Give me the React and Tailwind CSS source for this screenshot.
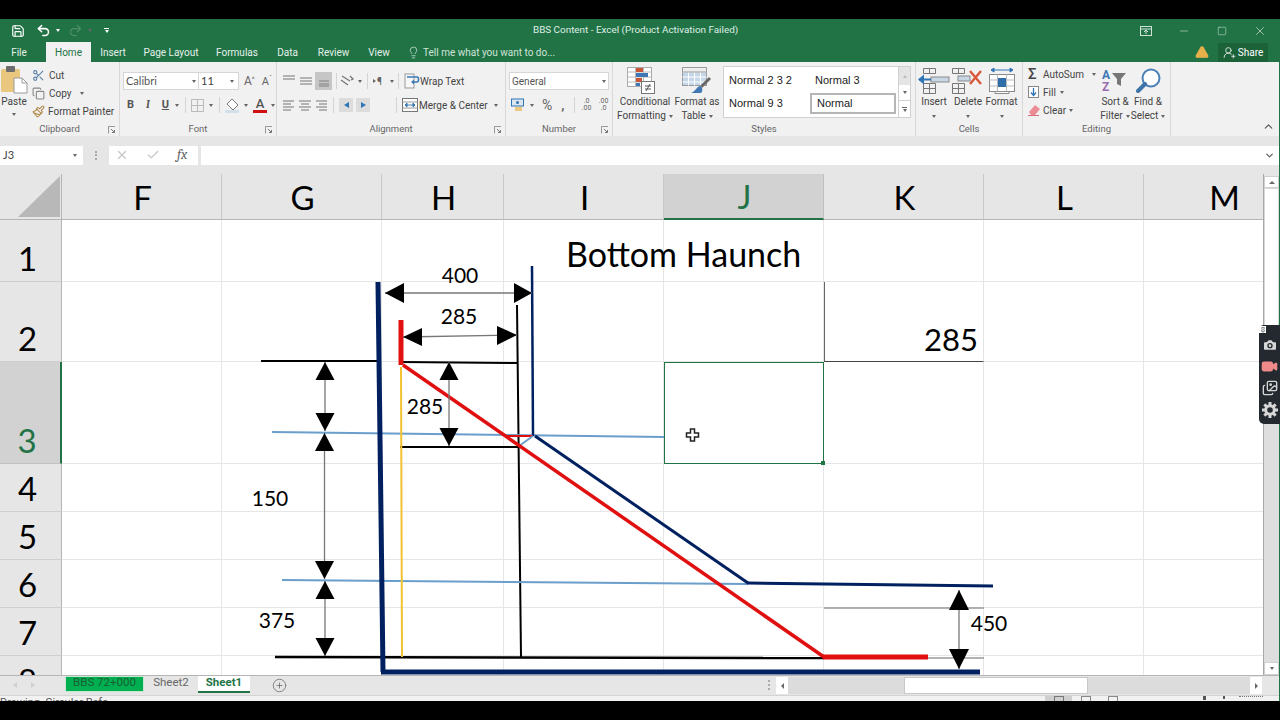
import React from "react";
import {
  Save, Undo2, Redo2, Minus, Square, X, Lightbulb, TriangleAlert, UserRoundPlus, ChevronUp, ChevronDown,
  Scissors, Copy, Paintbrush, Check, CirclePlus, Camera, Video, Images, Pin,
} from "lucide-react";

function Caret({ className = "" }) {
  return <span className={`inline-block w-0 h-0 border-x-[2.5px] border-t-[3px] border-x-transparent border-t-[#666] ${className}`} />;
}

function Launcher() {
  return (
    <svg width="8" height="8" viewBox="0 0 8 8" className="absolute right-[3px] top-[3px]">
      <path d="M.5 3V.5H7M.5.5V7.5" stroke="#999" fill="none" />
      <path d="M3 3l3.5 3.5M6.5 4v2.5H4" stroke="#777" fill="none" />
    </svg>
  );
}

function Group({ w, label, launcher, children }) {
  return (
    <div className={`${w} shrink-0 flex flex-col border-r border-[#d8d8d8] pt-[2px]`}>
      <div className="h-[59px] shrink-0">{children}</div>
      <div className="relative h-[13px] shrink-0 flex items-center justify-center text-[9.5px] text-[#666]">
        {label}
        {launcher && <Launcher />}
      </div>
    </div>
  );
}

function Lines({ rows, w = 14 }) {
  return (
    <svg width={w} height="14" viewBox="0 0 14 14">
      {rows.map(([y, x1, x2], i) => (
        <line key={i} x1={x1} x2={x2} y1={y} y2={y} stroke="#8a8a8a" strokeWidth="1.2" />
      ))}
    </svg>
  );
}

function Sep({ className = "" }) {
  return <span className={`w-px h-[16px] bg-[#d4d4d4] ${className}`} />;
}

function PasteIcon() {
  return (
    <svg width="27" height="28" viewBox="0 0 27 28">
      <rect x="0" y="3" width="19" height="23" rx="1.5" fill="#e9c77f" />
      <rect x="5" y="0" width="9" height="6" rx="1" fill="#6d6d6d" />
      <path d="M13 12h8l5 5v10H13z" fill="#fff" stroke="#9a9a9a" />
      <path d="M21 12v5h5" fill="none" stroke="#9a9a9a" />
    </svg>
  );
}

function WrapIcon() {
  return (
    <svg width="16" height="16" viewBox="0 0 16 16">
      <rect x="1" y="1" width="9" height="14" fill="#f7f7f7" stroke="#999" />
      <path d="M3 4h10c2 0 2 5 0 5H8" fill="none" stroke="#3b7ab5" strokeWidth="1.6" />
      <path d="M10 6.5L7 9l3 2.5z" fill="#3b7ab5" />
    </svg>
  );
}

function MergeIcon() {
  return (
    <svg width="16" height="14" viewBox="0 0 16 14">
      <rect x=".5" y=".5" width="15" height="13" fill="#fff" stroke="#777" />
      <path d="M.5 4h15M.5 10h15" stroke="#999" />
      <path d="M3 7h10M3 7l2-2v4zM13 7l-2-2v4z" stroke="#3b7ab5" fill="#3b7ab5" />
    </svg>
  );
}

function IndentBtn({ dir, className = "" }) {
  return (
    <span className={`w-[14px] h-[14px] bg-[#dcdcdc] flex items-center justify-center ${className}`}>
      {dir === "l"
        ? <span className="w-0 h-0 border-y-[3.5px] border-r-[5px] border-y-transparent border-r-[#2f75b5]" />
        : <span className="w-0 h-0 border-y-[3.5px] border-l-[5px] border-y-transparent border-l-[#2f75b5]" />}
    </span>
  );
}

function TableCF() {
  return (
    <svg width="36" height="28" viewBox="0 0 36 28">
      <rect x=".5" y=".5" width="24" height="19" fill="#fff" stroke="#aaa" />
      <path d="M8.5 .5v19M16.5 .5v19M.5 5h24M.5 10h24M.5 15h24" stroke="#bbb" />
      <rect x="9" y="1" width="7" height="4" fill="#c9573a" />
      <rect x="9" y="6" width="12" height="4" fill="#3f78b5" />
      <rect x="9" y="11" width="6" height="4" fill="#c9573a" />
      <rect x="9" y="16" width="4" height="3" fill="#3f78b5" />
      <rect x="14.5" y="14.5" width="13" height="12" fill="#fff" stroke="#777" />
      <path d="M18 19h6M18 22h6M19 24l4-7" stroke="#555" fill="none" />
    </svg>
  );
}

function TableFT() {
  return (
    <svg width="30" height="28" viewBox="0 0 30 28">
      <rect x=".5" y=".5" width="24" height="18" fill="#c5d6e8" stroke="#9a9a9a" />
      <path d="M6.5 .5v18M12.5 .5v18M18.5 .5v18M.5 5h24M.5 10h24M.5 15h24" stroke="#fff" />
      <path d="M.5 .5h24v4.500h-24z" fill="#eee" stroke="#9a9a9a" />
      <path d="M29 12l-9 9-2-2 9-9z" fill="#666" />
      <path d="M18 19c-4 1-4 5-9 7h10c2-2 2-5-1-7z" fill="#3f78b5" />
    </svg>
  );
}

function InsertIcon() {
  return (
    <svg width="32" height="26" viewBox="0 0 32 26">
      <path d="M5.500 .5h12v5h-12zM11.500 .5v5M5.500 15.500h12v10h-12zM11.500 15.500v10M5.500 20.500h12" fill="none" stroke="#777" />
      <rect x="13" y="9" width="18" height="5" fill="#c9d6e4" stroke="#8a8a8a" />
      <path d="M1 11.500h12" stroke="#2f75b5" strokeWidth="2" />
      <path d="M0 11.500l6-5v10z" fill="#2f75b5" />
    </svg>
  );
}

function DeleteIcon() {
  return (
    <svg width="32" height="26" viewBox="0 0 32 26">
      <path d="M.5 .5h12v5H.5zM6.500 .5v5M.5 15.500h12v10H.5zM6.500 15.500v10M.5 20.500h12" fill="none" stroke="#777" />
      <rect x="6" y="8" width="12" height="5" fill="#c9d6e4" stroke="#8a8a8a" />
      <path d="M18 3l11 13M29 3L18 16" stroke="#d9583b" strokeWidth="2.4" />
    </svg>
  );
}

function FormatIcon() {
  return (
    <svg width="26" height="26" viewBox="0 0 26 26">
      <path d="M2 2h22M2 2l3-2v4zM24 2l-3-2v4z" stroke="#2f75b5" fill="#2f75b5" />
      <rect x=".5" y="6.500" width="25" height="17" fill="#fff" stroke="#8a8a8a" />
      <path d="M8.500 6.500v17M17.500 6.500v17M.5 12h25M.5 18h25" stroke="#bbb" />
      <rect x="9" y="10" width="8" height="9" fill="#2f6ea8" />
      <path d="M6 23.500h14v2H6z" fill="#fff" stroke="#8a8a8a" />
    </svg>
  );
}

function SortIcon() {
  return (
    <div className="flex w-[26px] h-[26px] font-bold leading-[12px] text-[12px]">
      <div className="flex flex-col pt-px">
        <span className="text-[#3f78b5]">A</span>
        <span className="text-[#9a6bb0]">Z</span>
      </div>
      <svg width="14" height="13" viewBox="0 0 14 13" className="ml-[2px] mt-[5px]">
        <path d="M0 0h14L9 6v7l-4-2V6z" fill="#777" />
      </svg>
    </div>
  );
}

function FindIcon() {
  return (
    <svg width="25" height="25" viewBox="0 0 25 25">
      <circle cx="15" cy="10" r="8.500" fill="#fff" stroke="#4a82b8" strokeWidth="2" />
      <path d="M9 16l-7 7" stroke="#3d74a8" strokeWidth="4" strokeLinecap="round" />
    </svg>
  );
}

function GearIcon() {
  const teeth = [0, 45, 90, 135, 180, 225, 270, 315];
  return (
    <svg width="16" height="16" viewBox="0 0 16 16" className="mt-[6px]">
      <circle cx="8" cy="8" r="4.300" fill="none" stroke="#d6d6d6" strokeWidth="3" />
      {teeth.map((a) => (
        <rect key={a} x="6.500" y="0" width="3" height="3" fill="#d6d6d6" transform={`rotate(${a} 8 8)`} />
      ))}
    </svg>
  );
}

function TallBtn({ w, label, label2, icon, className = "" }) {
  return (
    <div className={`${w} flex flex-col items-center leading-[14px] ${className}`}>
      <div className="h-[29px] flex items-center justify-center">{icon}</div>
      <div className="whitespace-nowrap">{label}</div>
      <div className="whitespace-nowrap flex items-center gap-[3px] h-[14px]">
        {label2}
        <Caret />
      </div>
    </div>
  );
}

function Ribbon() {
  return (
    <div className="h-[74px] bg-[#f1f1f1] flex text-[10px] text-[#444]">
      <Group w="w-[120px]" label="Clipboard" launcher>
        <div className="flex">
          <div className="w-[28px] flex flex-col items-center pt-[2px]">
            <PasteIcon />
            <div className="mt-[1px] leading-[14px]">Paste</div>
            <Caret className="mt-[4px]" />
          </div>
          <div className="flex flex-col ml-[4px] pt-[2px] whitespace-nowrap">
            <div className="h-[18px] flex items-center gap-[4px]"><Scissors size={13} className="text-[#5b7fa8]" />Cut</div>
            <div className="h-[18px] flex items-center gap-[4px]"><Copy size={13} className="text-[#888]" />Copy<Caret className="ml-[4px]" /></div>
            <div className="h-[18px] flex items-center gap-[3px]"><Paintbrush size={13} className="text-[#b08a4a]" />Format Painter</div>
          </div>
        </div>
      </Group>

      <Group w="w-[157px]" label="Font" launcher>
        <div className="pt-[8px] pl-[3px]">
          <div className="flex items-center h-[18px]">
            <div className="w-[76px] h-[18px] bg-white border border-[#d6d6d6] flex items-center justify-between px-[2px] text-[#555] font-['Lato',sans-serif] text-[11px]">Calibri<Caret /></div>
            <div className="w-[40px] h-[18px] bg-white border border-l-0 border-[#d6d6d6] flex items-center justify-between px-[2px] pr-[4px] font-['Lato',sans-serif] text-[11px]">11<Caret /></div>
            <span className="ml-[5px] text-[12px] text-[#666] leading-none">A<sup className="text-[7px]">^</sup></span>
            <span className="ml-[7px] text-[11px] text-[#666] leading-none">A<sup className="text-[7px]">ˇ</sup></span>
          </div>
          <div className="flex items-center h-[18px] mt-[6px] text-[11px] text-[#555]">
            <b className="ml-[4px] font-bold">B</b>
            <i className="ml-[12px] font-serif font-bold">I</i>
            <u className="ml-[12px] font-bold">U</u>
            <Caret className="ml-[6px]" />
            <Sep className="ml-[6px]" />
            <svg width="13" height="13" viewBox="0 0 13 13" className="ml-[5px]"><path d="M.5.5h12v12H.5zM6.500.5v12M.5 6.500h12" fill="none" stroke="#bbb" /></svg>
            <Caret className="ml-[5px]" />
            <Sep className="ml-[6px]" />
            <svg width="16" height="15" viewBox="0 0 16 15" className="ml-[5px]"><path d="M7 1l6 6-5 5-6-6z" fill="#fff" stroke="#777" /><rect y="12" width="14" height="3" fill="#cfe0ee" /></svg>
            <Caret className="ml-[3px]" />
            <div className="ml-[5px] flex flex-col items-center w-[14px] text-[13px] leading-[13px] font-medium">A<span className="w-[14px] h-[3px] bg-[#d01010]" /></div>
            <Caret className="ml-[4px]" />
          </div>
        </div>
      </Group>

      <Group w="w-[229px]" label="Alignment" launcher>
        <div className="pt-[8px] pl-[5px]">
          <div className="flex items-center h-[18px] whitespace-nowrap">
            <Lines rows={[[2, 1, 13], [5, 1, 13]]} />
            <span className="ml-[3px]"><Lines rows={[[4, 1, 13], [7, 1, 13], [10, 1, 13]]} /></span>
            <span className="ml-[2px] w-[17px] h-[18px] bg-[#c6c6c6] flex items-center justify-center"><Lines rows={[[7, 2, 12], [10, 2, 12], [12, 2, 12]]} /></span>
            <Sep className="ml-[4px]" />
            <svg width="14" height="14" viewBox="0 0 14 14" className="ml-[3px]"><path d="M2 2l8 5M1 6l7 5M10 2l3 3-2 1" stroke="#777" strokeWidth="1.300" fill="none" /></svg>
            <Caret className="ml-[4px]" />
            <Sep className="ml-[5px]" />
            <span className="ml-[5px] w-[12px] flex items-center gap-px text-[10px] text-[#666]"><span className="w-0 h-0 border-y-[2.5px] border-l-[3px] border-y-transparent border-l-[#666]" />¶</span>
            <Caret className="ml-[5px]" />
            <Sep className="ml-[4px]" />
            <span className="ml-[5px]"><WrapIcon /></span>
            <span>Wrap Text</span>
          </div>
          <div className="flex items-center h-[18px] mt-[6px] whitespace-nowrap">
            <Lines rows={[[3, 1, 12], [6, 1, 9], [9, 1, 12], [12, 1, 9]]} />
            <span className="ml-[2px]"><Lines rows={[[3, 1, 13], [6, 3, 11], [9, 1, 13], [12, 3, 11]]} /></span>
            <span className="ml-[2px]"><Lines rows={[[3, 2, 13], [6, 5, 13], [9, 2, 13], [12, 5, 13]]} /></span>
            <Sep className="ml-[5px]" />
            <IndentBtn dir="l" className="ml-[5px]" />
            <IndentBtn dir="r" className="ml-[3px]" />
            <Sep className="ml-[26px]" />
            <span className="ml-[5px]"><MergeIcon /></span>
            <span className="ml-[1px]">Merge &amp; Center</span>
            <Caret className="ml-[6px]" />
          </div>
        </div>
      </Group>

      <Group w="w-[107px]" label="Number" launcher>
        <div className="pt-[8px] pl-[3px]">
          <div className="w-[100px] h-[18px] bg-white border border-[#d6d6d6] flex items-center justify-between px-[2px] text-[#555]">General<Caret /></div>
          <div className="flex items-center h-[18px] mt-[6px] text-[#666]">
            <svg width="14" height="14" viewBox="0 0 14 14" className="ml-[2px]"><rect x=".5" y="1" width="12" height="7" fill="#dbe6f0" stroke="#2f75b5" /><circle cx="6.500" cy="4.500" r="1.500" fill="#2f75b5" /><rect x="4" y="9" width="7" height="4" fill="#e9c77f" /></svg>
            <Caret className="ml-[5px]" />
            <span className="ml-[8px] text-[14px] leading-none">%</span>
            <span className="ml-[9px] text-[13px] leading-none font-bold">,</span>
            <Sep className="ml-[10px]" />
            <span className="ml-[5px] w-[12px] text-[7px] leading-[7px] text-center">.0<br />.00</span>
            <span className="ml-[5px] w-[12px] text-[7px] leading-[7px] text-center">.00<br />.0</span>
          </div>
        </div>
      </Group>

      <Group w="w-[303px]" label="Styles">
        <div className="flex pt-[2px]">
          <TallBtn w="w-[56px] ml-[4px]" icon={<TableCF />} label="Conditional" label2="Formatting" />
          <TallBtn w="w-[48px]" icon={<TableFT />} label="Format as" label2="Table" />
          <div className="ml-[2px] w-[176px] h-[52px] bg-white border border-[#d0d0d0] grid grid-cols-[86px_86px] grid-rows-[26px_21px] text-[11px] text-[#222] font-['Liberation_Sans',sans-serif]">
            <div className="pl-[5px] flex items-center">Normal 2 3 2</div>
            <div className="pl-[5px] flex items-center">Normal 3</div>
            <div className="pl-[5px] flex items-center">Normal 9 3</div>
            <div className="pl-[5px] flex items-center border-2 border-[#b5b5b5]">Normal</div>
          </div>
          <div className="w-[12px] h-[52px] flex flex-col bg-white border border-l-0 border-[#d0d0d0]">
            <span className="h-[18px] bg-[#e4e4e4] flex items-center justify-center"><span className="w-0 h-0 border-x-[2px] border-b-[3px] border-x-transparent border-b-[#bbb]" /></span>
            <span className="h-[16px] border-b border-[#d0d0d0] flex items-center justify-center"><Caret /></span>
            <span className="flex-1 flex flex-col items-center justify-center gap-px"><span className="w-[5px] h-px bg-[#666]" /><Caret /></span>
          </div>
        </div>
      </Group>

      <Group w="w-[107px]" label="Cells">
        <div className="flex pt-[2px]">
          <TallBtn w="w-[34px]" className="ml-[1px]" icon={<InsertIcon />} label="Insert" />
          <TallBtn w="w-[34px]" icon={<DeleteIcon />} label="Delete" />
          <TallBtn w="w-[33px]" icon={<FormatIcon />} label="Format" />
        </div>
      </Group>

      <Group w="w-[148px]" label="Editing">
        <div className="flex">
          <div className="flex flex-col w-[75px] pl-[5px] pt-px whitespace-nowrap">
            <div className="h-[18px] flex items-center gap-[4px]"><span className="w-[11px] text-[15px] leading-none font-medium text-[#444]">Σ</span>AutoSum<Caret className="ml-[4px]" /></div>
            <div className="h-[18px] flex items-center gap-[4px]">
              <svg width="11" height="12" viewBox="0 0 11 12"><rect x=".5" y=".5" width="10" height="11" fill="#fff" stroke="#888" /><path d="M5.500 2v7M3 6.500l2.500 3 2.500-3" stroke="#2f75b5" fill="none" strokeWidth="1.300" /></svg>
              Fill<Caret />
            </div>
            <div className="h-[18px] flex items-center gap-[3px]">
              <svg width="12" height="12" viewBox="0 0 12 12"><path d="M1 8l6-7 5 4-5 6H3z" fill="#ec8d96" /><path d="M0 11.500h11" stroke="#d9707c" /></svg>
              Clear<Caret />
            </div>
          </div>
          <TallBtn w="w-[32px]" icon={<SortIcon />} label="Sort &amp;" label2="Filter" className="ml-[1px] pt-[2px]" />
          <TallBtn w="w-[34px]" icon={<FindIcon />} label="Find &amp;" label2="Select" className="pt-[2px]" />
        </div>
      </Group>

      <div className="flex-1 flex items-end justify-end pb-[3px] pr-[4px]">
        <ChevronUp size={13} strokeWidth={2} className="text-[#555]" />
      </div>
    </div>
  );
}

const tabs = [
  ["File", "w-[38px]"],
  ["Home", "w-[45px] ml-[8px]", true],
  ["Insert", "w-[44px]"],
  ["Page Layout", "w-[72px]"],
  ["Formulas", "w-[60px]"],
  ["Data", "w-[41px]"],
  ["Review", "w-[51px]"],
  ["View", "w-[40px]"],
];

const colHeads = ["F", "G", "H", "I", "J", "K", "L", "M"];
const rowHeads = ["1", "2", "3", "4", "5", "6", "7", "8"];

function Sheet() {
  return (
    <div className="relative w-[1264px] h-[501px] overflow-hidden bg-white border-r border-[#a8a8a8] font-['Lato',sans-serif] text-black">
      <div className="grid grid-cols-[62px_160px_160px_122px_160px_160px_160px_160px_160px] grid-rows-[46px_62px_80px_102px_48px_48px_48px_48px_48px]">
        <div className="bg-[#e6e6e6] border-r border-b border-[#b5b5b5] flex items-end justify-end pb-[2px] pr-px">
          <svg width="42" height="41" viewBox="0 0 42 41"><path d="M42 0v41H0z" fill="#b8b8b8" /></svg>
        </div>
        {colHeads.map((c) => (
          <div
            key={c}
            className={`flex items-end justify-center pl-[2px] pb-[5px] text-[33px] leading-none border-r ${c === "J" ? "bg-[#d2d2d2] text-[#217346] border-[#c0c0c0] border-b-2 border-b-[#217346]" : "bg-[#e6e6e6] border-[#c8c8c8] border-b border-b-[#b5b5b5]"}`}
          >
            {c}
          </div>
        ))}
        {rowHeads.map((r) => (
          <React.Fragment key={r}>
            <div
              className={`flex items-end justify-center pr-[6px] pb-[6px] text-[33px] leading-none border-b ${r === "3" ? "bg-[#d2d2d2] text-[#217346] border-[#c0c0c0] border-r-2 border-r-[#217346]" : "bg-[#e6e6e6] border-[#cfcfcf] border-r border-r-[#b5b5b5]"}`}
            >
              {r}
            </div>
            {colHeads.map((c) => {
              if (c === "I" && r === "1") {
                return (
                  <div key={c} className="border-r border-b border-[#e4e4e4] pl-[62px] pt-[17px] text-[34px] leading-none whitespace-nowrap">
                    Bottom Haunch
                  </div>
                );
              }
              if (c === "K" && r === "2") {
                return (
                  <div key={c} className="border-r border-[#e4e4e4] border-l border-b border-l-[#666] border-b-[#444] flex items-end justify-end pr-[5px] pb-[6px] text-[31px] leading-none">
                    285
                  </div>
                );
              }
              if (c === "J" && r === "3") {
                return (
                  <div key={c} className="relative border border-[#217346]">
                    <span className="absolute right-[-2px] bottom-[-2px] w-[4px] h-[4px] bg-[#217346]" />
                  </div>
                );
              }
              return <div key={c} className="border-r border-b border-[#e6e6e6]" />;
            })}
          </React.Fragment>
        ))}
      </div>
      <Drawing />
    </div>
  );
}

function ArrowV({ x, top, bottom, h = 18, hw = 9.500 }) {
  return (
    <g>
      <line x1={x} x2={x} y1={top} y2={bottom} stroke="#777" strokeWidth="1.300" />
      <path d={`M${x} ${top}L${x - hw} ${top + h}H${x + hw}Z`} fill="#000" />
      <path d={`M${x} ${bottom}L${x - hw} ${bottom - h}H${x + hw}Z`} fill="#000" />
    </g>
  );
}

function Drawing() {
  return (
    <svg className="absolute left-0 top-0" width="1264" height="501" viewBox="0 174 1264 501">
      <line x1="824" y1="608" x2="984" y2="608" stroke="#999" strokeWidth="1.500" />
      <line x1="824" y1="658" x2="984" y2="658" stroke="#999" strokeWidth="1.500" />
      <line x1="261" y1="361" x2="378" y2="361" stroke="#000" strokeWidth="2" />
      <line x1="402" y1="362" x2="518" y2="363" stroke="#000" strokeWidth="2" />
      <line x1="400" y1="447" x2="518" y2="447" stroke="#000" strokeWidth="2" />
      <line x1="517" y1="305" x2="521" y2="657" stroke="#000" strokeWidth="2" />
      <line x1="275" y1="657" x2="824" y2="658" stroke="#000" strokeWidth="2.500" />
      <line x1="272" y1="432" x2="664" y2="437" stroke="#6a9ecb" strokeWidth="2" />
      <line x1="282" y1="580" x2="748" y2="584" stroke="#6a9ecb" strokeWidth="2" />
      <line x1="401" y1="367" x2="402" y2="657" stroke="#f2c230" strokeWidth="2" />
      <line x1="378" y1="282" x2="383" y2="672" stroke="#002060" strokeWidth="5" />
      <line x1="381" y1="672" x2="980" y2="672" stroke="#002060" strokeWidth="5" />
      <line x1="532" y1="266" x2="533" y2="436" stroke="#002060" strokeWidth="2.500" />
      <line x1="535" y1="436" x2="748" y2="583" stroke="#002060" strokeWidth="3" />
      <line x1="747" y1="583" x2="993" y2="586" stroke="#002060" strokeWidth="3" />
      <line x1="505" y1="436" x2="533" y2="436" stroke="#e01010" strokeWidth="2" />
      <path d="M533 436L519 446" stroke="#6a9ecb" strokeWidth="2" fill="none" />
      <line x1="401" y1="320" x2="401" y2="365" stroke="#e01010" strokeWidth="5" />
      <line x1="403" y1="365" x2="824" y2="657" stroke="#e01010" strokeWidth="3.500" />
      <line x1="823" y1="657" x2="928" y2="657" stroke="#e01010" strokeWidth="5" />

      <line x1="385" y1="293" x2="532" y2="293" stroke="#777" strokeWidth="1.300" />
      <path d="M385 293L404 283V303Z M532 293L514 283V303Z" fill="#000" />
      <line x1="403" y1="337" x2="517" y2="335" stroke="#777" strokeWidth="1.300" />
      <path d="M403 337L422 328V346Z M517 335L497 326V345Z" fill="#000" />
      <ArrowV x={449} top={362} bottom={446} />
      <ArrowV x={325} top={362} bottom={431} />
      <ArrowV x={324.500} top={433} bottom={579} />
      <ArrowV x={325} top={581} bottom={656} />
      <ArrowV x={959} top={590} bottom={669} h={20} hw={10} />

      <g className="font-['Lato',sans-serif] text-[21px]" fill="#000" textAnchor="middle">
        <text x="460" y="283">400</text>
        <text x="459" y="324">285</text>
        <text x="425" y="414">285</text>
        <text x="270" y="506">150</text>
        <text x="277" y="628">375</text>
        <text x="989" y="631">450</text>
      </g>

      <g transform="translate(692.500 435)">
        <path d="M-2-6h4v4h4v4h-4v4h-4v-4h-4v-4h4z" fill="#fff" stroke="#222" strokeWidth="1.500" />
      </g>
    </svg>
  );
}

function VScroll() {
  return (
    <div className="w-[15px] h-[501px] bg-[#e6e6e6] flex flex-col">
      <div className="mt-[2px] h-[12px] bg-white border border-[#d0d0d0] flex items-center justify-center">
        <span className="w-0 h-0 border-x-[3px] border-b-[3px] border-x-transparent border-b-[#666]" />
      </div>
      <div className="h-[232px] bg-white border border-[#d8d8d8]" />
      <div className="flex-1 bg-[#dedede]" />
      <div className="h-[13px] bg-white border border-[#d0d0d0] flex items-center justify-center"><Caret /></div>
    </div>
  );
}

function SheetTabs() {
  return (
    <div className="h-[20px] bg-[#e6e6e6] flex items-start text-[11px] border-t border-[#b5b5b5]">
      <span className="ml-[13px] mt-[6px] w-0 h-0 border-y-[3px] border-r-[4px] border-y-transparent border-r-[#cfcfcf]" />
      <span className="ml-[14px] mt-[6px] w-0 h-0 border-y-[3px] border-l-[4px] border-y-transparent border-l-[#cfcfcf]" />
      <div className="ml-[30px] w-[79px] h-[16px] bg-[#00b050] border border-[#c8e6d2] flex items-center justify-center pb-[2px] text-[#1b5e35] text-[11.500px]">BBS 72+000</div>
      <div className="w-[54px] h-[16px] flex items-center justify-center pb-[2px] text-[#666] text-[11.500px]">Sheet2</div>
      <div className="w-[52px] h-[17px] bg-white border-b-2 border-[#217346] flex items-center justify-center pb-[2px] font-bold text-[#217346] text-[11.500px]">Sheet1</div>
      <CirclePlus size={15} strokeWidth={1.200} className="ml-[22px] mt-[2px] text-[#666]" />
      <span className="ml-[481px] mt-[4px] w-[2px] h-[10px] border-l-2 border-dotted border-[#aaa]" />
      <div className="ml-[6px] mt-px w-[12px] h-[17px] bg-white flex items-center justify-center"><span className="w-0 h-0 border-y-[3px] border-r-[3px] border-y-transparent border-r-[#666]" /></div>
      <div className="w-[116px] h-[17px] mt-px bg-[#dcdcdc]" />
      <div className="w-[184px] h-[17px] mt-px bg-white border border-[#c8c8c8]" />
      <div className="w-[162px] h-[17px] mt-px bg-[#dcdcdc]" />
      <div className="mt-px w-[12px] h-[17px] bg-white flex items-center justify-center"><span className="w-0 h-0 border-y-[3px] border-l-[3px] border-y-transparent border-l-[#666]" /></div>
    </div>
  );
}

function StatusBar() {
  return (
    <div className="h-[6px] bg-[#f1f1f1] overflow-hidden flex items-start text-[11px] leading-[14px] text-[#555] border-t border-[#d4d4d4]">
      <span className="w-[82px] whitespace-nowrap">Drawing&nbsp;&nbsp;Circular Refs</span>
      <div className="ml-[963px] w-[27px] h-[6px] bg-[#cfcfcf] flex justify-center"><span className="w-[10px] h-[6px] border border-[#777]" /></div>
      <span className="ml-[9px] w-[10px] h-[6px] border border-[#888]" />
      <span className="ml-[17px] w-[10px] h-[6px] border border-[#888]" />
      <span className="ml-[85px] w-[3px] h-[4px] bg-[#555]" />
      <span className="ml-[17px] w-[2px] h-[3px] bg-[#555]" />
      <span className="ml-[14px] w-[24px] h-[2px] border-t border-dotted border-[#777]" />
    </div>
  );
}

export default function App() {
  return (
    <div className="relative w-[1280px] h-[720px] overflow-hidden bg-black font-['Roboto',sans-serif] flex flex-col">
      <div className="h-[19px] shrink-0" />
      <div className="w-[1280px] h-[682px] flex flex-col border-r border-[#217346] bg-[#e6e6e6]">
        <div className="h-[23px] bg-[#217346] text-white flex items-center text-[9.9px]">
          <div className="w-[533px] flex items-center">
            <Save size={14} strokeWidth={2} className="ml-[11px]" />
            <Undo2 size={15} strokeWidth={2.500} className="ml-[11px]" />
            <Caret className="ml-[5px] border-t-white" />
            <Redo2 size={15} className="ml-[8px] text-[#4c8d68]" />
            <Caret className="ml-[5px] border-t-[#4c8d68]" />
            <span className="ml-[12px] flex flex-col items-center gap-px"><span className="w-[5px] h-px bg-white" /><Caret className="border-t-white" /></span>
          </div>
          <div className="text-[#dfeee5] whitespace-nowrap">BBS Content - Excel (Product Activation Failed)</div>
          <div className="flex-1 flex justify-end items-center h-full text-[#cfe3d7]">
            <span className="w-[38px] flex justify-center">
              <svg width="12" height="10" viewBox="0 0 12 10"><rect x=".5" y=".5" width="11" height="9" fill="none" stroke="currentColor" /><path d="M.5 3h11M6 8V4M4 6l2-2 2 2" stroke="currentColor" fill="none" /></svg>
            </span>
            <span className="w-[38px] flex justify-center"><Minus size={12} strokeWidth={1.200} /></span>
            <span className="w-[38px] flex justify-center"><Square size={10} strokeWidth={1.300} /></span>
            <span className="w-[38px] flex justify-center"><X size={14} strokeWidth={1.200} /></span>
          </div>
        </div>

        <div className="h-[20px] bg-[#217346] flex items-stretch text-[10px] text-[#e4f0e9]">
          {tabs.map(([t, w, active]) => (
            <div key={t} className={`${w} flex items-center justify-center ${active ? "bg-[#f1f1f1] text-[#217346]" : ""}`}>{t}</div>
          ))}
          <div className="ml-[8px] flex items-center text-[#cfe3d7]">
            <Lightbulb size={13} strokeWidth={1.400} />
            <span className="ml-[3px] whitespace-nowrap">Tell me what you want to do...</span>
          </div>
          <div className="flex-1 flex justify-end items-center">
            <TriangleAlert size={14} fill="#e8b04a" stroke="#e8b04a" className="mr-[9px]" />
            <div className="w-[50px] h-[19px] mr-[11px] bg-[#1c6239] flex items-center justify-center gap-[2px] text-white">
              <UserRoundPlus size={13} strokeWidth={1.400} />
              Share
            </div>
          </div>
        </div>

        <Ribbon />

        <div className="h-[9px]" />
        <div className="h-[20px] flex items-center text-[10px]">
          <div className="w-[83px] h-[19px] bg-white flex items-center justify-between pl-[3px] pr-[6px] text-[#444] font-['Lato',sans-serif] text-[11px]">J3<Caret /></div>
          <span className="ml-[12px] h-[9px] border-l-2 border-dotted border-[#aaa]" />
          <div className="ml-[12px] w-[89px] h-[19px] bg-white flex items-center text-[#c4c4c4]">
            <X size={14} className="ml-[6px]" />
            <Check size={14} className="ml-[17px]" />
            <span className="ml-[17px] font-serif italic text-[14px] leading-none text-[#666]">fx</span>
          </div>
          <div className="ml-[3px] w-[1078px] h-[19px] bg-white flex items-center justify-end pr-[4px]">
            <ChevronDown size={11} strokeWidth={3} className="text-[#666]" />
          </div>
        </div>
        <div className="h-[9px]" />

        <div className="flex">
          <Sheet />
          <VScroll />
        </div>
        <SheetTabs />
        <StatusBar />
      </div>

      <div className="absolute left-[1259px] top-[325px] w-[21px] h-[99px] rounded-l-[5px] bg-[#23292e] flex flex-col items-center text-[#d6d6d6]">
        <span className="self-start w-[7px] h-[7px] mt-px bg-white flex items-center justify-center"><Pin size={6} className="text-[#23292e]" /></span>
        <Camera size={16} fill="#d6d6d6" stroke="#23292e" className="mt-[4px]" />
        <Video size={17} fill="#f08a8a" stroke="#f08a8a" className="mt-[5px]" />
        <Images size={16} className="mt-[5px]" />
        <GearIcon />
      </div>
    </div>
  );
}
